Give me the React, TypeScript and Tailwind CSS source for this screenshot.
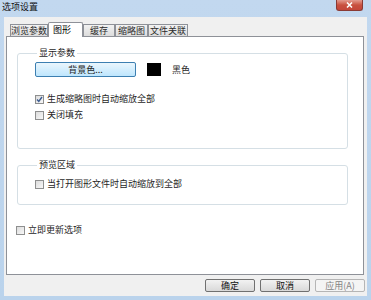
import { useState } from "react";

const font = "font-['Noto_Sans_CJK_SC','Noto_Sans',sans-serif]";

function Check({ checked, label, disabled }: { checked?: boolean; label: string; disabled?: boolean }) {
  return (
    <label className="flex items-center gap-[3px] h-[12px]">
      <span className="w-[9px] h-[9px] border border-[#8e8f8f] bg-gradient-to-br from-[#dcdcdc] to-[#f8f8f8] flex items-center justify-center">
        {checked && (
          <svg width="7" height="7" viewBox="0 0 7 7">
            <path d="M1 3.5 L2.8 5.5 L6 1" stroke="#3c5c92" strokeWidth="1.4" fill="none" />
          </svg>
        )}
      </span>
      <span className={disabled ? "text-[#8d8d8d]" : "text-[#1e1e1e]"}>{label}</span>
    </label>
  );
}

function Tab({ label, w, active }: { label: string; w: string; active?: boolean }) {
  if (active)
    return (
      <div className={`${w} h-[15px] -mb-[1px] bg-white border border-b-0 border-[#8e9198] rounded-t-[2px] flex items-start pl-[4px] pt-[1px] z-10`}>
        {label}
      </div>
    );
  return (
    <div className={`${w} h-[12px] mt-[2px] bg-gradient-to-b from-[#f2f2f2] to-[#dcdcdc] border border-b-0 border-[#8e9198] flex items-center justify-center text-[#2a2a2a]`}>
      {label}
    </div>
  );
}

function Btn({ label, disabled }: { label: string; disabled?: boolean }) {
  return (
    <button
      className={`w-[50px] h-[13px] rounded-[2px] border flex items-center justify-center leading-none ${
        disabled ? "border-[#b5b5b5] bg-[#f4f4f4] text-[#838383]" : "border-[#707070] bg-gradient-to-b from-[#f2f2f2] to-[#d9d9d9] text-[#111]"
      }`}
    >
      {label}
    </button>
  );
}

export default function App() {
  const [tab] = useState("图形");
  return (
    <div className={`w-[371px] h-[300px] bg-gradient-to-b from-[#c2d8ef] to-[#bad3ec] flex flex-col text-[9px] leading-[12px] ${font}`}>
      <div className="h-[17px] flex items-start">
        <span className="pl-[2px] pt-[1px] text-[9px] text-[#111]">选项设置</span>
        <div className="ml-auto mr-[8px] w-[27px] h-[11px] rounded-b-[3px] border border-t-0 border-[#8a3a34] bg-gradient-to-b from-[#e39a8f] via-[#c8503f] to-[#c4463a] flex items-center justify-center">
          <svg width="7" height="6" viewBox="0 0 7 6">
            <path d="M1 0.5 L6 5.5 M6 0.5 L1 5.5" stroke="#fff" strokeWidth="1.5" />
          </svg>
        </div>
      </div>

      <div className="flex-1 mx-[4px] mb-[4px] bg-[#f0f0f0] flex flex-col pl-[2px] pr-[3px] pt-[5px]">
        <div className="flex items-start pl-[4px] relative">
          {[
            ["浏览参数", "w-[38px]"],
            ["图形", "w-[35px]"],
            ["缓存", "w-[32px]"],
            ["缩略图", "w-[33px]"],
            ["文件关联", "w-[40px]"],
          ].map(([t, w]) => (
            <Tab key={t} label={t} w={w} active={t === tab} />
          ))}
        </div>

        <div className="h-[239px] bg-white border border-[#8e9198] pl-[10px] pt-[10px] flex flex-col">
          <fieldset className="w-[331px] h-[102px] border border-[#d5dfe5] rounded-[3px] pl-[17px]">
            <legend className="ml-[2px] px-[2px] text-[#1e1e1e]">显示参数</legend>
            <div className="flex items-center mt-[3px] h-[15px]">
              <button className="w-[101px] h-[15px] rounded-[2px] border border-[#3c7fb1] bg-gradient-to-b from-[#eaf6fd] to-[#bee6fd] flex items-center justify-center text-[#1e1e1e] leading-none">
                背景色...
              </button>
              <span className="ml-[11px] w-[14px] h-[13px] bg-black" />
              <span className="ml-[11px] text-[#1e1e1e]">黑色</span>
            </div>
            <div className="mt-[16px] flex flex-col gap-[4px]">
              <Check checked label="生成缩略图时自动缩放全部" />
              <Check label="关闭填充" />
            </div>
          </fieldset>

          <fieldset className="mt-[10px] w-[331px] h-[46px] border border-[#d5dfe5] rounded-[3px] pl-[17px]">
            <legend className="ml-[2px] px-[2px] text-[#1e1e1e]">预览区域</legend>
            <div className="mt-[7px]">
              <Check label="当打开图形文件时自动缩放到全部" />
            </div>
          </fieldset>

          <div className="mt-[19px] -ml-[1px]">
            <Check label="立即更新选项" />
          </div>
        </div>

        <div className="flex justify-end gap-[5px] mt-[4px] -mr-[1px]">
          <Btn label="确定" />
          <Btn label="取消" />
          <Btn label="应用(A)" disabled />
        </div>
      </div>
    </div>
  );
}
